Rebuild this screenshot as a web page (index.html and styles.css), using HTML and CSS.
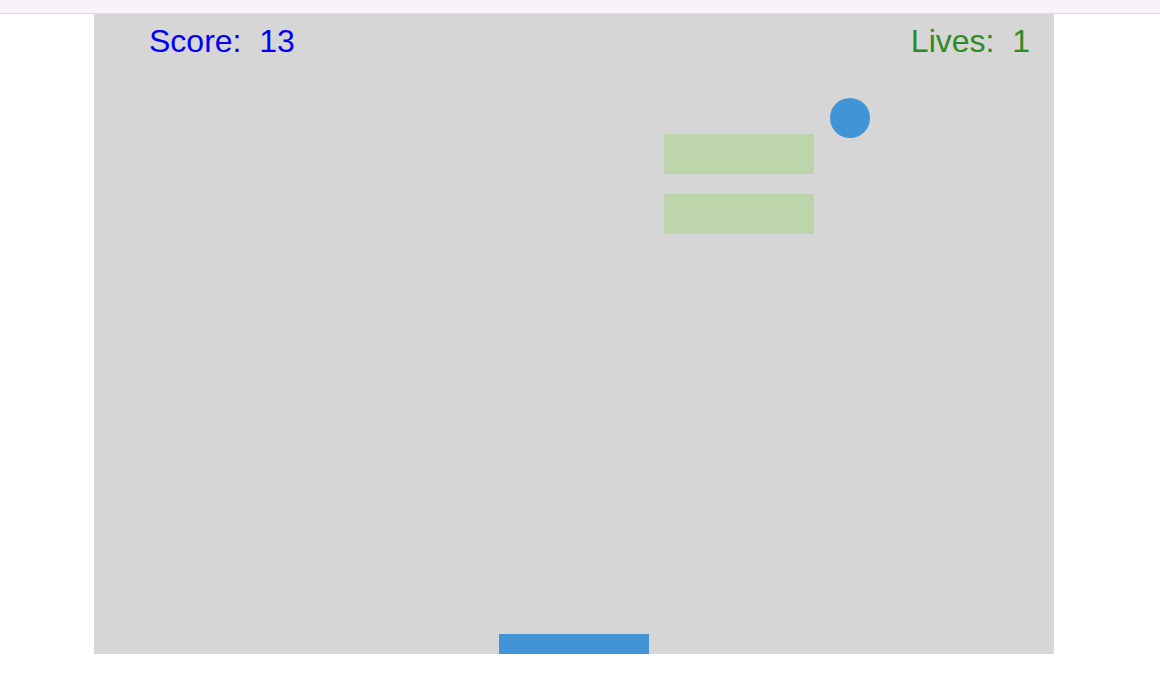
FILE: index.html
```html
<!DOCTYPE html>
<html lang="en">
<head>
    <meta charset="UTF-8">
    <meta name="viewport" content="width=device-width, initial-scale=1.0">
    <title>Breakout</title>
    <link rel="stylesheet" href="styles.css">
</head>
<body>
    <div class="topbar"></div>
    <div id="game">
        <div class="hud">
            <span class="score">Score:&nbsp; 13</span>
            <span class="lives">Lives:&nbsp; 1</span>
        </div>
        <div class="brick" style="left: 570px; top: 120px;"></div>
        <div class="brick" style="left: 570px; top: 180px;"></div>
        <div class="ball" style="left: 736px; top: 84px;"></div>
        <div class="paddle" style="left: 405px;"></div>
    </div>
</body>
</html>
```

FILE: styles.css
```css
body {
    margin: 0;
    background-color: white;
    font-family: "Liberation Sans", Arial, sans-serif;
}
.topbar {
    height: 13px;
    background-color: #f7f3f8;
    border-bottom: 1px solid #dcdcdc;
}
#game {
    position: relative;
    width: 960px;
    height: 640px;
    margin-left: 94px;
    background-color: #d6d6d6;
    overflow: hidden;
}
.hud {
    display: flex;
    justify-content: space-between;
    padding: 11px 24px 0 55px;
    font-size: 32px;
    line-height: 32px;
}
.score {
    color: #0000f5;
}
.lives {
    color: #2e8b24;
}
.brick {
    position: absolute;
    width: 150px;
    height: 40px;
    background-color: #bcd5aa;
}
.ball {
    position: absolute;
    width: 40px;
    height: 40px;
    border-radius: 50%;
    background-color: #4194d6;
}
.paddle {
    position: absolute;
    bottom: 0;
    width: 150px;
    height: 20px;
    background-color: #4194d6;
}
```
